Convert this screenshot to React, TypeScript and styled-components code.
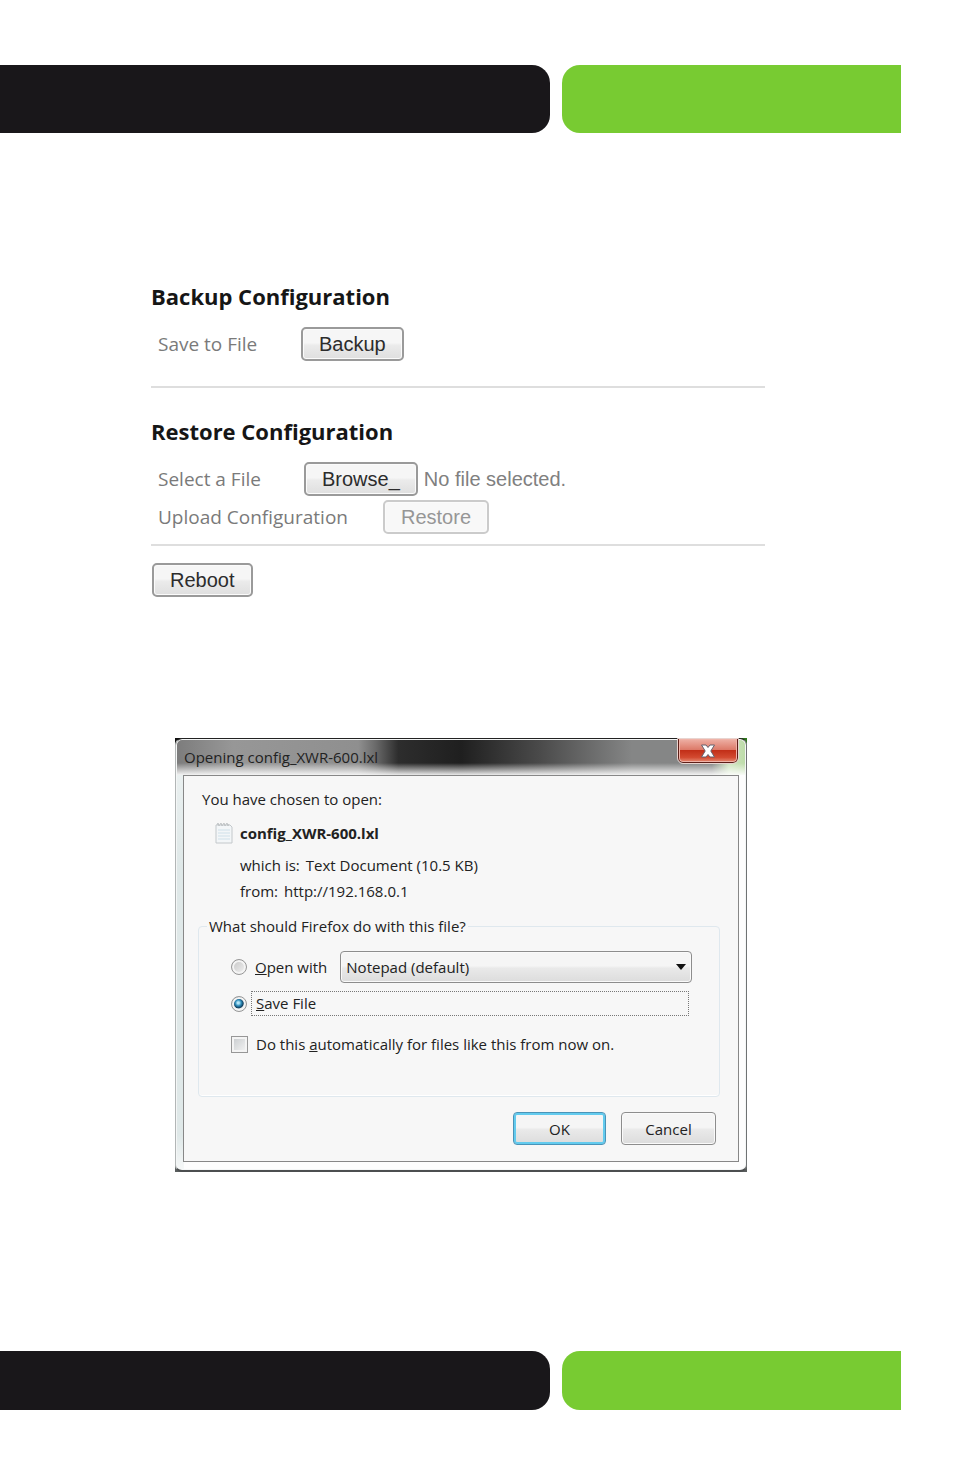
import React, { useRef, useState } from "react";
import styled, { createGlobalStyle, css } from "styled-components";

const GlobalStyle = createGlobalStyle`
  *, *::before, *::after { box-sizing: border-box; }
  body { margin: 0; background: #fff; }
  button, input, select { font: inherit; color: inherit; margin: 0; }
`;

const uiFont = `"Open Sans", "Noto Sans", sans-serif`;
const plainFont = `"Liberation Sans", Arial, sans-serif`;

const Page = styled.div`
  display: flex;
  flex-direction: column;
  padding: 65px 0;
`;

const Band = styled.div<{ $height: number }>`
  display: flex;
  gap: 12px;
  height: ${(p) => p.$height}px;
  margin-right: 53px;
`;

const BandBlack = styled.div`
  flex: 550 1 0;
  background: #19171a;
  border-radius: 0 18px 18px 0;
`;

const BandGreen = styled.div`
  flex: 339 1 0;
  background: #78cb32;
  border-radius: 18px 0 0 18px;
`;

const Settings = styled.main`
  margin: 149px 189px 0 151px;
  font-family: ${uiFont};
`;

const Section = styled.section<{ $padBottom: number; $gap: number }>`
  padding-bottom: ${(p) => p.$padBottom}px;
  margin-bottom: ${(p) => p.$gap}px;
  border-bottom: 2px solid #dedede;
`;

const Heading = styled.h2`
  margin: 0 0 17px;
  font-size: 22px;
  line-height: 28px;
  font-weight: 700;
  color: #161616;
`;

const Row = styled.div`
  display: flex;
  align-items: center;
  padding-left: 7px;
  & + & { margin-top: 4px; }
`;

const RowLabel = styled.label<{ $width: number }>`
  flex: 0 0 ${(p) => p.$width}px;
  font-size: 19px;
  line-height: 28px;
  color: #7a7a7a;
`;

const GreyButton = styled.button`
  height: 34px;
  padding: 0 16px;
  font-family: ${plainFont};
  font-size: 20px;
  line-height: 28px;
  color: #2c2c2c;
  border: 2px solid #9a9a9a;
  border-radius: 5px;
  background: linear-gradient(#f6f6f6 0 46%, #ebebeb 54%, #dfdfdf);
  box-shadow: inset 0 0 0 1px #fbfbfb;
  &:disabled {
    color: #969696;
    border-color: #cbcbcb;
    background: #f8f8f8;
  }
`;

const Footer = styled.div`
  padding-left: 1px;
`;

const HiddenFile = styled.input`
  display: none;
`;

const FileName = styled.span`
  margin-left: 6px;
  font-family: ${plainFont};
  font-size: 20px;
  line-height: 28px;
  color: #808080;
`;

const DialogBackdrop = styled.div`
  margin: 141px 207px 179px 175px;
  background: linear-gradient(90deg, #111 0 95%, #2f7a1c) top / 100% 40px no-repeat, #5a5e5e;
`;

const Dialog = styled.section`
  padding: 0 7px 8px;
  border: 1px solid #6f7273;
  border-top-color: #222;
  border-left-color: #b2b6b6;
  border-bottom: 2px solid #4c4f50;
  border-radius: 7px;
  box-shadow: inset 0 0 0 1px #f4f6f6;
  background:
    linear-gradient(transparent 24px, rgba(255, 255, 255, 0.9) 36px) top / 100% 36px no-repeat,
    linear-gradient(90deg, #7c7c7c, #979797 10%, #8f8f8f 32%, #6a6a6a 35%, #2d2d2d 39%, #1f1f1f 50%, #4b4b4b 64%, #858686 80%, #858686 94%, #cfe4c0 97%, #bddca8) top / 100% 36px no-repeat,
    linear-gradient(#eef3f3, #dfe8e8 30% 92%, #f6f8f8) left / 8px 100% no-repeat,
    #fdfdfd;
  font-family: ${uiFont};
  font-size: 15px;
  line-height: 20px;
  color: #222;
`;

const TitleBar = styled.header`
  display: flex;
  justify-content: space-between;
  align-items: flex-start;
  height: 36px;
`;

const Title = styled.h1`
  margin: 8px 0 0 1px;
  font-size: 15px;
  line-height: 20px;
  font-weight: 400;
`;

const CloseButton = styled.button`
  display: flex;
  align-items: center;
  justify-content: center;
  width: 60px;
  height: 24px;
  margin-right: 1px;
  padding: 0;
  border: 1px solid #5d1f18;
  border-top: 0;
  border-radius: 0 0 5px 5px;
  outline: 1px solid #e8d4d0;
  background: linear-gradient(#eeb1a6, #dd7a69 46%, #c22f18 50%, #d34a30 80%, #e58b74);
  box-shadow: inset 0 0 0 1px #f0b3a8;
`;

const Client = styled.form`
  display: flex;
  flex-direction: column;
  padding: 13px 18px 16px 14px;
  border: 1px solid #878787;
  background: #f7f7f7;
`;

const Intro = styled.p`
  margin: 0 0 13px 4px;
`;

const FileRow = styled.div`
  display: flex;
  align-items: center;
  gap: 7px;
  margin-left: 17px;
`;

const Details = styled.dl`
  display: grid;
  gap: 6px;
  margin: 11px 0 15px 42px;
`;

const Detail = styled.div`
  display: flex;
  gap: 6px;
  dt, dd { margin: 0; }
`;

const Group = styled.fieldset`
  min-width: 0;
  margin: 0;
  padding: 15px 27px 42px 32px;
  border: 1px solid #dfe8ee;
  border-radius: 4px;
  box-shadow: inset 0 -1px 0 #fff;
`;

const Legend = styled.legend`
  margin-left: -24px;
  padding: 0 2px;
`;

const Option = styled.div<{ $top?: number }>`
  display: flex;
  align-items: center;
  margin-top: ${(p) => p.$top ?? 0}px;
`;

const checkShape = css`
  appearance: none;
  flex: none;
  border: 1px solid #979797;
  box-shadow: inset 0 0 0 2px #f4f4f4;
`;

const Radio = styled.input.attrs({ type: "radio" })`
  ${checkShape}
  width: 16px;
  height: 16px;
  border-radius: 50%;
  background: linear-gradient(135deg, #c4c4c4, #f4f4f4);
  &:checked {
    background: radial-gradient(circle at 45% 42%, #b4e6f8 0 1px, #2d8cba 3px, #123f5e 5px, #dfe5e8 6px);
  }
`;

const Check = styled.input.attrs({ type: "checkbox" })`
  ${checkShape}
  width: 17px;
  height: 17px;
  background: linear-gradient(135deg, #c6c9cc, #f6f6f6);
`;

const OptionLabel = styled.label`
  margin-left: 8px;
`;

const FocusLabel = styled.label`
  flex: 1;
  margin: 0 3px 0 4px;
  padding: 1px 4px 2px;
  border: 1px dotted #777;
`;

const SelectWrap = styled.div`
  flex: 1;
  display: grid;
  align-items: center;
  margin-left: 13px;
  svg {
    grid-area: 1 / 1;
    justify-self: end;
    margin-right: 6px;
    pointer-events: none;
  }
`;

const Select = styled.select`
  grid-area: 1 / 1;
  appearance: none;
  width: 100%;
  height: 32px;
  padding: 0 5px;
  border: 1px solid #8d8d8d;
  border-radius: 4px;
  background: linear-gradient(#f5f5f5 0 46%, #e9e9e9 54%, #dcdcdc);
  box-shadow: inset 0 0 0 1px #fafafa;
`;

const Actions = styled.div`
  display: flex;
  justify-content: flex-end;
  gap: 15px;
  margin: 15px 4px 0 0;
`;

const DialogButton = styled.button<{ $primary?: boolean; $width: number }>`
  width: ${(p) => p.$width}px;
  height: 33px;
  padding: 0;
  border: 1px solid ${(p) => (p.$primary ? "#4a94b8" : "#8d8d8d")};
  border-radius: 4px;
  background: linear-gradient(#f5f5f5 0 46%, #e9e9e9 54%, #dcdcdc);
  box-shadow: inset 0 0 0 ${(p) => (p.$primary ? "2px #63cbee" : "1px #fafafa")};
`;

function CloseIcon() {
  return (
    <svg width="16" height="14" viewBox="0 0 16 14" aria-hidden="true">
      <path
        d="M1.500 1h4.500L8 3.500 10 1h4.500L10.800 7l3.700 6H10L8 10.500 6 13H1.500L5.200 7z"
        fill="#fff"
        stroke="#66606c"
        strokeLinejoin="round"
      />
    </svg>
  );
}

function NotepadIcon() {
  return (
    <svg width="18" height="22" viewBox="0 0 18 22" aria-hidden="true">
      <path d="M1 3h14l2 2v16H1z" fill="#f3f6f8" stroke="#c3c8cb" />
      <path d="M3 8h12M3 11h12M3 14h12M3 17h12" stroke="#cfe0e9" />
      <path d="M2 3l1-2 1 3 2-3 1 3 2-3 1 3 2-3 1 3 1-2" fill="none" stroke="#bfc3c5" />
    </svg>
  );
}

export default function App() {
  const fileInput = useRef<HTMLInputElement>(null);
  const [fileName, setFileName] = useState("");
  const [action, setAction] = useState("save");

  return (
    <>
      <GlobalStyle />
      <Page>
        <Band $height={68}>
          <BandBlack />
          <BandGreen />
        </Band>

        <Settings>
          <Section $padBottom={25} $gap={29}>
            <Heading>Backup Configuration</Heading>
            <Row>
              <RowLabel htmlFor="backup" $width={143}>Save to File</RowLabel>
              <GreyButton id="backup" type="button">Backup</GreyButton>
            </Row>
          </Section>
          <Section $padBottom={10} $gap={17}>
            <Heading>Restore Configuration</Heading>
            <Row>
              <RowLabel htmlFor="browse" $width={146}>Select a File</RowLabel>
              <GreyButton id="browse" type="button" onClick={() => fileInput.current?.click()}>
                Browse_
              </GreyButton>
              <HiddenFile
                ref={fileInput}
                type="file"
                aria-label="Select a File"
                onChange={(e) => setFileName(e.target.files?.[0]?.name ?? "")}
              />
              <FileName>{fileName || "No file selected."}</FileName>
            </Row>
            <Row>
              <RowLabel htmlFor="restore" $width={225}>Upload Configuration</RowLabel>
              <GreyButton id="restore" type="button" disabled={!fileName}>Restore</GreyButton>
            </Row>
          </Section>
          <Footer>
            <GreyButton type="button">Reboot</GreyButton>
          </Footer>
        </Settings>

        <DialogBackdrop>
          <Dialog role="dialog" aria-labelledby="dialog-title">
            <TitleBar>
              <Title id="dialog-title">Opening config_XWR-600.lxl</Title>
              <CloseButton type="button" aria-label="Close">
                <CloseIcon />
              </CloseButton>
            </TitleBar>
            <Client onSubmit={(e) => e.preventDefault()}>
              <Intro>You have chosen to open:</Intro>
              <FileRow>
                <NotepadIcon />
                <strong>config_XWR-600.lxl</strong>
              </FileRow>
              <Details>
                <Detail><dt>which is:</dt><dd>Text Document (10.5 KB)</dd></Detail>
                <Detail><dt>from:</dt><dd>http://192.168.0.1</dd></Detail>
              </Details>
              <Group>
                <Legend>What should Firefox do with this file?</Legend>
                <Option>
                  <Radio id="open" name="action" checked={action === "open"} onChange={() => setAction("open")} />
                  <OptionLabel htmlFor="open"><u>O</u>pen with</OptionLabel>
                  <SelectWrap>
                    <Select aria-label="Application" defaultValue="notepad">
                      <option value="notepad">Notepad (default)</option>
                    </Select>
                    <svg width="10" height="6" viewBox="0 0 10 6" aria-hidden="true">
                      <path d="M0 0h10L5 6z" fill="#111" />
                    </svg>
                  </SelectWrap>
                </Option>
                <Option $top={8}>
                  <Radio id="save" name="action" checked={action === "save"} onChange={() => setAction("save")} />
                  <FocusLabel htmlFor="save"><u>S</u>ave File</FocusLabel>
                </Option>
                <Option $top={18}>
                  <Check id="always" />
                  <OptionLabel htmlFor="always">Do this <u>a</u>utomatically for files like this from now on.</OptionLabel>
                </Option>
              </Group>
              <Actions>
                <DialogButton type="submit" $primary $width={93}>OK</DialogButton>
                <DialogButton type="button" $width={95}>Cancel</DialogButton>
              </Actions>
            </Client>
          </Dialog>
        </DialogBackdrop>

        <Band $height={59}>
          <BandBlack />
          <BandGreen />
        </Band>
      </Page>
    </>
  );
}
